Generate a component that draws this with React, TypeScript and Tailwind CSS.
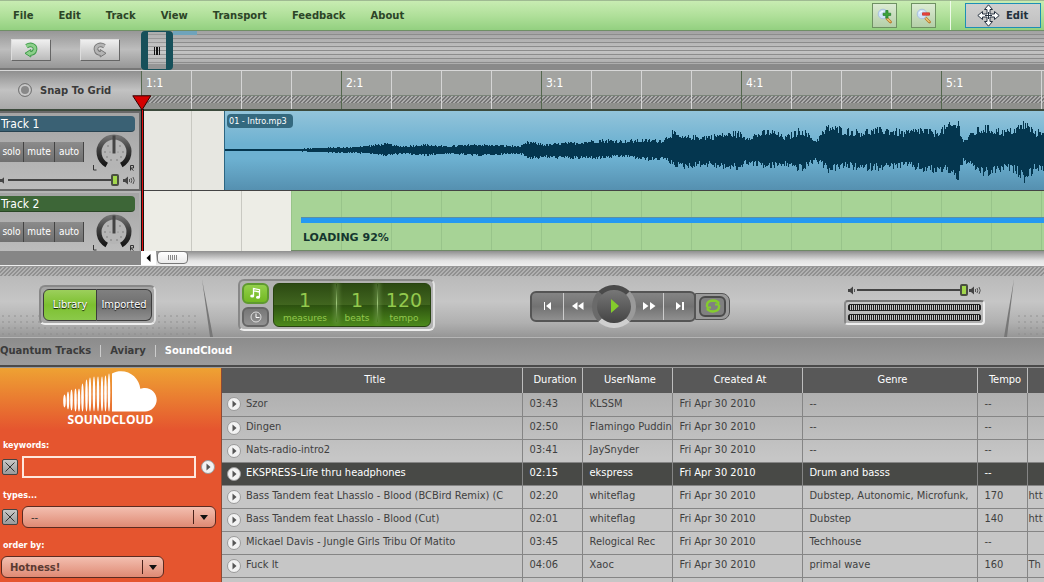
import React, { useState } from "react";

const MENU = ["File", "Edit", "Track", "View", "Transport", "Feedback", "About"];

const ENVELOPE: [number, number, number][] = [
  [0, 1, 1], [65, 1, 1], [85, 2, 2], [125, 3, 3], [145, 5, 4], [160, 7, 6], [175, 4, 4],
  [200, 6, 6], [220, 4, 4], [250, 6, 6], [275, 5, 5], [295, 4, 4], [303, 9, 9], [320, 6, 8],
  [350, 8, 9], [375, 11, 9], [400, 10, 7], [425, 11, 11], [438, 11, 10], [447, 20, 15],
  [455, 14, 19], [480, 15, 16], [513, 19, 21], [520, 14, 14], [545, 21, 19], [560, 14, 16],
  [577, 23, 22], [590, 10, 11], [603, 26, 22], [620, 22, 18], [635, 20, 21], [660, 23, 19],
  [680, 19, 17], [695, 23, 21], [710, 19, 23], [722, 26, 22], [733, 30, 31], [738, 10, 12],
  [750, 21, 21], [760, 25, 27], [780, 20, 20], [790, 23, 23], [800, 30, 32], [810, 19, 20],
  [819, 24, 22], [1400, 22, 22],
];

function buildWave(): string {
  let seed = 12345;
  const rnd = () => {
    seed = (seed * 1103515245 + 12345) % 2147483648;
    return seed / 2147483648;
  };
  let d = "";
  let k = 0;
  for (let x = 0; x < 1400; x++) {
    while (k < ENVELOPE.length - 2 && x >= ENVELOPE[k + 1][0]) k++;
    const [x0, u0, d0] = ENVELOPE[k];
    const [x1, u1, d1] = ENVELOPE[k + 1];
    const t = Math.min(1, (x - x0) / (x1 - x0));
    const up = Math.max(1, Math.round((u0 + (u1 - u0) * t) * (0.65 + 0.4 * rnd())));
    const dn = Math.max(1, Math.round((d0 + (d1 - d0) * t) * (0.65 + 0.4 * rnd())));
    d += `M${x} ${39 - up}h1v${up + dn}h-1z`;
  }
  return d;
}
const WAVE = buildWave();

type Row = { title: string; dur: string; user: string; genre: string; tempo: string; extra: string };
const ROWS: Row[] = [
  { title: "Szor", dur: "03:43", user: "KLSSM", genre: "--", tempo: "--", extra: "" },
  { title: "Dingen", dur: "02:50", user: "Flamingo Puddin", genre: "--", tempo: "--", extra: "" },
  { title: "Nats-radio-intro2", dur: "03:41", user: "JaySnyder", genre: "--", tempo: "--", extra: "" },
  { title: "EKSPRESS-Life thru headphones", dur: "02:15", user: "ekspress", genre: "Drum and basss", tempo: "--", extra: "" },
  { title: "Bass Tandem feat Lhasslo - Blood (BCBird Remix) (C", dur: "02:20", user: "whiteflag", genre: "Dubstep, Autonomic, Microfunk,", tempo: "170", extra: "htt" },
  { title: "Bass Tandem feat Lhasslo - Blood (Cut)", dur: "02:01", user: "whiteflag", genre: "Dubstep", tempo: "140", extra: "htt" },
  { title: "Mickael Davis - Jungle Girls Tribu Of Matito", dur: "03:45", user: "Relogical Rec", genre: "Techhouse", tempo: "--", extra: "" },
  { title: "Fuck It", dur: "04:06", user: "Xaoc", genre: "primal wave", tempo: "160", extra: "Th" },
];

const HATCH = "bg-[linear-gradient(135deg,#767676_25%,#adadad_25%,#adadad_50%,#767676_50%,#767676_75%,#adadad_75%)] bg-[size:4px_4px]";
const DOTS = "bg-[radial-gradient(circle,#8a8a8a_1px,transparent_1px)] bg-[size:6px_6px]";

function MagIcon({ plus }: { plus: boolean }) {
  return (
    <svg width="16" height="16" viewBox="0 0 16 16" aria-hidden="true">
      <path d="M9.500 10l4 4" stroke="#b9792a" strokeWidth="2.800" strokeLinecap="round" />
      <path d="M10 10.500l3.200 3.200" stroke="#f2cf7e" strokeWidth="1.200" strokeLinecap="round" />
      <circle cx="6" cy="6" r="4.800" fill="#cfe3f8" stroke="#a9c1dc" />
      <path d="M3.300 5.500a3 3 0 0 1 3-2.300" stroke="#fff" fill="none" />
      {plus ? (
        <path d="M8.800 2.500h2.200v2.700h2.700v2.200H11v2.700H8.800V7.400H6.100V5.200h2.700z" fill="#3fa53a" stroke="#1f7a28" strokeWidth=".7" />
      ) : (
        <path d="M6.500 4.800h7v2.400h-7z" fill="#ef4a40" stroke="#c0251f" strokeWidth=".7" />
      )}
    </svg>
  );
}

function MoveIcon() {
  return (
    <svg width="23" height="23" viewBox="0 0 23 23" aria-hidden="true">
      <path
        d="M11.500 .8l4 4.700h-2.500v4.500h4.500V7.500l4.700 4-4.700 4V13h-4.500v4.500h2.500l-4 4.700-4-4.700h2.500V13H5.500v2.500l-4.700-4 4.700-4V10H10V5.500H7.500z"
        fill="#fff" stroke="#26313f" strokeWidth="1"
      />
      <path d="M11.500 8v7M8 11.500h7" stroke="#26313f" />
    </svg>
  );
}

function UndoIcon({ redo }: { redo?: boolean }) {
  const edge = redo ? "#777" : "#3d9a48";
  const fill = redo ? "#b4b4b4" : "#8ccf8a";
  const arc = "M3.500 4.200C8 1.500 12.500 3.500 12 7.500c-.5 2.700-2.800 4-5 4";
  return (
    <svg width="16" height="16" viewBox="0 0 16 16" aria-hidden="true">
      <g transform={redo ? "matrix(-1 0 0 1 16 0)" : undefined} fill="none">
        <path d={arc} stroke={edge} strokeWidth="4.600" />
        <path d="M7.800 7.500v7.500L2 11.300z" fill={fill} stroke={edge} />
        <path d={arc} stroke={fill} strokeWidth="2.800" />
      </g>
    </svg>
  );
}

function Speaker({ loud }: { loud?: boolean }) {
  return (
    <svg width={loud ? 12 : 8} height="9" viewBox={loud ? "0 0 12 9" : "0 0 8 9"} aria-hidden="true">
      <path d="M0 3h2l3-2.500v8L2 6H0z" fill="#444" />
      <path d="M6.500 3v3" stroke="#555" fill="none" />
      {loud && <path d="M8 2q1.500 2.500 0 5M10 1q2.500 3.500 0 7" stroke="#555" fill="none" />}
    </svg>
  );
}

function Knob() {
  return (
    <svg width="42" height="38" viewBox="0 0 42 38" aria-hidden="true">
      <defs>
        <linearGradient id="knob" x1="0" y1="0" x2="0" y2="1">
          <stop offset="0" stopColor="#707070" />
          <stop offset=".5" stopColor="#3a3a3a" />
          <stop offset="1" stopColor="#161616" />
        </linearGradient>
      </defs>
      <circle cx="21" cy="19" r="12" fill="#b5b5b5" />
      <path d="M13.700 32A15 15 0 1 1 28.300 32" fill="none" stroke="url(#knob)" strokeWidth="5" />
      <path d="M21 2.500v18" stroke="#444" strokeWidth="3" />
      <g fill="#777">
        <circle cx="15" cy="13" r=".8" /><circle cx="27" cy="13" r=".8" />
        <circle cx="12" cy="19" r=".8" /><circle cx="30" cy="19" r=".8" />
        <circle cx="14" cy="24" r=".8" /><circle cx="28" cy="24" r=".8" />
        <circle cx="18" cy="27" r=".8" /><circle cx="24" cy="27" r=".8" />
        <circle cx="17" cy="19" r=".6" /><circle cx="25" cy="19" r=".6" />
      </g>
      <path d="M.5 32v5h3M37.500 37.500v-5h3v2.500h-3l3 2.500" stroke="#333" fill="none" />
    </svg>
  );
}

function Slider({ label }: { label: string }) {
  return (
    <input
      type="range"
      defaultValue={100}
      aria-label={label}
      className="h-3 w-full min-w-0 flex-1 appearance-none bg-[linear-gradient(#444,#444)] bg-[size:100%_2px] bg-center bg-no-repeat [&::-webkit-slider-thumb]:h-3 [&::-webkit-slider-thumb]:w-2 [&::-webkit-slider-thumb]:appearance-none [&::-webkit-slider-thumb]:rounded-xs [&::-webkit-slider-thumb]:border-2 [&::-webkit-slider-thumb]:border-[#4a4f40] [&::-webkit-slider-thumb]:bg-[#a3d84c]"
    />
  );
}

function TrackHeader({ name, selected }: { name: string; selected?: boolean }) {
  return (
    <div
      className={
        "w-[141px] shrink-0 overflow-hidden bg-[linear-gradient(#a4a4a4,#bcbcbc)] " +
        (selected ? "h-20 border-y-2 border-r-2 border-[#686868]" : "h-15 border-t-2 border-r-2 border-t-[#b4b4b4] border-r-[#b0b0b0]")
      }
    >
      <div
        className={
          "mt-[3px] mr-1 h-4 rounded-r border-b border-black/30 pl-px font-[DejaVu_Sans_Condensed] text-[12px] leading-4 text-white " +
          (selected ? "bg-[#3a6174]" : "bg-[#3d6637]")
        }
      >
        {name}
      </div>
      <div className="flex h-[39px] items-end justify-between pr-1">
        <div className="mb-[9px] flex h-5">
          {["solo", "mute", "auto"].map((b, i) => (
            <button
              key={b}
              className={
                "border-r border-r-[#444] bg-[linear-gradient(#8b8b8b,#707070)] font-[DejaVu_Sans_Condensed] text-[10px] leading-5 text-white " +
                (i === 0 ? "w-6" : i === 1 ? "w-[31px]" : "w-[29px]")
              }
            >
              {b}
            </button>
          ))}
        </div>
        <Knob />
      </div>
      <div className="flex items-center gap-1 pr-1 pt-[3px]">
        <span className="w-1 overflow-hidden"><Speaker /></span>
        <Slider label={name + " volume"} />
        <Speaker loud />
      </div>
    </div>
  );
}

function PlayDot() {
  return (
    <svg width="16" height="16" viewBox="0 0 16 16" aria-hidden="true">
      <circle cx="8" cy="8" r="6.500" fill="#f2f2f2" stroke="#9a9a9a" />
      <path d="M6.500 4.500v7L10.500 8z" fill="#555" />
    </svg>
  );
}

function CloudLogo() {
  const bars: [number, number, number][] = [
    [1.5, 24, 36], [5, 21, 38], [8.5, 19, 39], [12.5, 18, 40], [16, 18, 40], [19.5, 13, 40], [23.5, 9, 40],
    [27, 7, 40], [31, 6, 40], [35, 6, 40], [39, 6, 40], [42.500, 5, 40], [46, 3, 40],
  ];
  return (
    <svg width="96" height="41" viewBox="0 0 96 41" aria-label="SoundCloud" role="img">
      {bars.map(([x, a, b]) => (
        <ellipse key={x} cx={x} cy={(a + b) / 2} rx="1.300" ry={(b - a) / 2 + 0.5} fill="#fff" />
      ))}
      <path d="M49 2.500C52 .8 55 .3 58 .3c10 0 18.500 7.700 19.300 17.500 1.600-.7 3-.9 4.700-.9 6.500 0 11.700 5.300 11.700 11.800S88.500 40.500 82 40.500H49z" fill="#fff" />
    </svg>
  );
}

const PATHS = {
  start: "M3 1h1v8H3zM10 1v8L5 5z",
  rew: "M5.500 1v8L0 5zM11.500 1v8L6 5z",
  fwd: "M0 1v8l5.500-4zM7 1v8l5.500-4z",
  end: "M3 1v8l5-4zM9 1h2v8H9z",
};
function Glyph({ d }: { d: string }) {
  return (
    <svg width="13" height="10" viewBox="0 0 13 10" aria-hidden="true"><path d={d} fill="#fff" /></svg>
  );
}

function Lcd({ n, label, w }: { n: string; label: string; w: string }) {
  return (
    <div className={"flex flex-col items-center " + w}>
      <span className="text-[19px] leading-6">{n}</span>
      <span className="text-[9px] leading-3">{label}</span>
    </div>
  );
}

export default function App() {
  const [snap, setSnap] = useState(false);
  const th = "border-r border-[#bdbdbd] p-0 pl-[6px] font-normal";
  const td = "overflow-hidden whitespace-nowrap border-r border-[#858585] p-0 pl-[7px] text-left";
  const smallLabel = "pl-[3px] text-[8px] font-bold leading-3";
  const xButton = "flex size-4 shrink-0 items-center justify-center rounded-xs border border-[#444] bg-[linear-gradient(#c8c8c8,#9a9a9a)]";
  return (
    <div className="flex h-screen flex-col overflow-hidden bg-[#a5a5a5] font-[DejaVu_Sans,sans-serif] text-[#333]">
      <header className="flex h-[31px] shrink-0 items-center border-y border-t-[#9fba92] border-b-[#6f8f66] bg-[linear-gradient(#c8ecb2,#b0e09a_50%,#93d080)]">
        <nav className="flex flex-1 gap-[25px] pl-[13px]">
          {MENU.map((m) => (
            <button key={m} className="text-[10px] font-bold leading-4 text-[#2c4527]">{m}</button>
          ))}
        </nav>
        <button aria-label="Zoom in" className="mr-[14px] flex size-[25px] items-center justify-center border border-[#6f9163] bg-[linear-gradient(#dcecd3,#b4cfa8)]"><MagIcon plus /></button>
        <button aria-label="Zoom out" className="mr-[14px] flex size-[25px] items-center justify-center border border-[#6f9163] bg-[linear-gradient(#dcecd3,#b4cfa8)]"><MagIcon plus={false} /></button>
        <div className="mr-[14px] h-full w-px bg-[#eefae8]" />
        <button className="mr-[3px] flex h-[25px] w-[76px] items-center gap-[6px] border border-[#1d8fb5] bg-[linear-gradient(#cfcfcf,#c0c0c0)] pl-[11px] text-[10px] font-bold text-[#22303c]">
          <MoveIcon />Edit
        </button>
      </header>

      <div className="flex h-10 shrink-0 border-b border-[#d8d8d8]">
        <div className="flex w-[141px] shrink-0 items-center gap-[29px] border-b-2 border-[#777] bg-[linear-gradient(#979797,#bdbdbd_50%,#979797)] pl-[11px]">
          <button aria-label="Undo" className="flex h-[22px] w-10 items-center justify-center border border-t-[#ddd] border-r-[#666] border-b-[#666] border-l-[#ddd] bg-[linear-gradient(#efefef,#bbb)]"><UndoIcon /></button>
          <button aria-label="Redo" className="flex h-[22px] w-10 items-center justify-center border border-t-[#ddd] border-r-[#666] border-b-[#666] border-l-[#ddd] bg-[linear-gradient(#efefef,#bbb)]"><UndoIcon redo /></button>
        </div>
        <div className="flex flex-1 border-b-[6px] border-[#8a8a8a] bg-[repeating-linear-gradient(transparent_0px,transparent_3px,#8c8c8c_3px,#8c8c8c_4px),linear-gradient(#a2a2a2,#c4c4c4_60%,#adadad)]">
          <div className="flex h-[39px] w-8 items-center justify-center rounded border-x-[7px] border-y border-[#17505a] bg-white/10">
            <svg width="7" height="8" viewBox="0 0 7 8" aria-hidden="true"><path d="M0 0h1v8H0zM2 0h2v8H2zM5 0h1v8H5z" fill="#111" /></svg>
          </div>
          <div className="h-1 w-6 bg-[#6fa3bb]" />
        </div>
      </div>

      <div className="relative shrink-0">
        <div className="flex h-10 border-b-2 border-[#3c4a3c]">
          <label className="flex w-[141px] shrink-0 items-center gap-2 bg-[linear-gradient(#8f8f8f,#c2c2c2_50%,#a8a8a8)] pl-[18px] text-[10px] font-bold text-[#3a3a3a]">
            <input type="radio" checked={snap} onChange={() => undefined} onClick={() => setSnap(!snap)} className="size-[14px] appearance-none rounded-full border border-[#777] bg-[#888] shadow-[inset_0_0_0_2px_#c9c9c9]" />
            Snap To Grid
          </label>
          <div className="relative min-w-0 flex-1 overflow-hidden bg-[#a3a4a1]">
            <div className="h-6" />
            <div className={"h-2 border-t border-[#7b857a] " + HATCH} />
            <div className="h-2 bg-[#8f908d]" />
            <div className="absolute inset-0 flex bg-[repeating-linear-gradient(90deg,transparent_0px,transparent_50px,#d5d5d5_50px,#d5d5d5_51px,transparent_51px,transparent_100px,#d5d5d5_100px,#d5d5d5_101px,transparent_101px,transparent_150px,#d5d5d5_150px,#d5d5d5_151px,transparent_151px,transparent_200px)]">
              {["1:1", "2:1", "3:1", "4:1", "5:1"].map((t) => (
                <span key={t} className="w-[200px] shrink-0 border-l border-[#55684f] pl-1 pt-1 font-[DejaVu_Sans_Condensed] text-[12px] leading-4 text-white">{t}</span>
              ))}
            </div>
          </div>
        </div>

        <div className="flex h-20">
          <TrackHeader name="Track 1" selected />
          <div className="min-w-0 flex-1 border-b border-[#444] bg-[repeating-linear-gradient(90deg,transparent_0px,transparent_50px,#c9c9c2_50px,#c9c9c2_51px,transparent_51px,transparent_100px)] bg-[#e7e7e1]">
            <div className="relative ml-[83px] h-full overflow-hidden border-l border-[#2c6682] bg-[linear-gradient(#93c4da,#6db1d1_42%,#6db1d1_60%,#5590b0)]">
              <svg width="1400" height="78" viewBox="0 0 1400 78" className="absolute left-0 top-0" shapeRendering="crispEdges" aria-hidden="true">
                <path d={WAVE} fill="#04364f" />
              </svg>
              <span className="relative ml-[2px] mt-[3px] block h-[14px] w-[66px] whitespace-nowrap rounded-sm bg-[#34697f] pl-[2px] font-[DejaVu_Sans_Condensed] text-[9px] leading-[14px] text-white">01 - Intro.mp3</span>
            </div>
          </div>
        </div>
        <div className="flex h-15">
          <TrackHeader name="Track 2" />
          <div className="min-w-0 flex-1 bg-[repeating-linear-gradient(90deg,#c9c9c2_0px,#c9c9c2_1px,transparent_1px,transparent_50px)] bg-[#edede6]">
            <div className="ml-[150px] h-full border-b border-[#6f8a66] bg-[repeating-linear-gradient(90deg,#98c48a_0px,#98c48a_1px,transparent_1px,transparent_50px)] bg-[#a7d396] pt-[26px] pl-[10px]">
              <div role="progressbar" aria-label="Loading" aria-valuenow={92} className="h-[6px] border-t border-[#5b8ea5] bg-[#2599f2]" />
              <p className="mt-[7px] pl-[2px] text-[11px] font-bold leading-4 text-[#15362f]">LOADING 92%</p>
            </div>
          </div>
        </div>
        <svg width="20" height="156" viewBox="0 0 20 156" className="absolute bottom-0 left-[132px]" aria-hidden="true">
          <path d="M9 14h3v142H9z" fill="#111" /><path d="M10 14h1v142h-1z" fill="#e01010" />
          <path d="M.8.8h18L10 15z" fill="#d40000" stroke="#300" />
        </svg>
      </div>

      <div className="flex h-[14px] shrink-0">
        <div className="w-[141px] bg-[#868686]" />
        <div className="flex flex-1 bg-[linear-gradient(#8f8f8f,#e4e4e4_70%,#ededed)]">
          <button aria-label="Scroll left" className="flex w-[15px] items-center justify-center bg-white">
            <svg width="5" height="8" viewBox="0 0 5 8" aria-hidden="true"><path d="M4.500 0v8L.5 4z" fill="#000" /></svg>
          </button>
          <div className="ml-px flex h-[13px] w-[31px] items-center justify-center rounded border border-[#777] bg-[linear-gradient(#fff,#eaeaea)]">
            <svg width="10" height="5" viewBox="0 0 10 5" aria-hidden="true"><path d="M.5 0v5M2.500 0v5M4.500 0v5M6.500 0v5M8.500 0v5" stroke="#888" /></svg>
          </div>
        </div>
      </div>

      <section className="flex h-[72px] shrink-0 flex-col border-t border-[#eee] bg-[linear-gradient(#b5b5b5,#c6c6c6_50%,#b0b0b0_80%,#969696)]">
        <div className={"h-[10px] shrink-0 border-t border-[#888] opacity-60 " + HATCH} />
        <div className="relative flex min-h-0 flex-1">
          <div className={"absolute bottom-0 left-0 h-6 w-[200px] opacity-40 " + DOTS} />
          <div className={"absolute right-0 bottom-0 h-6 w-7 opacity-40 " + DOTS} />
          <svg width="14" height="58" viewBox="0 0 14 58" className="absolute bottom-0 left-[202px]" aria-hidden="true"><path d="M0 0l8 58h3z" fill="#777" /></svg>
          <svg width="14" height="58" viewBox="0 0 14 58" className="absolute right-[28px] bottom-0" aria-hidden="true"><path d="M12 0L2 58h3z" fill="#777" /></svg>

          <div className="relative mt-[9px] ml-[39px] flex h-10 w-[117px] rounded-md border-2 border-t-[#888] border-r-[#e2e2e2] border-b-[#eee] border-l-[#888] bg-[#a5a5a5] p-[2px]">
            <button className="w-[54px] rounded-l-md border border-[#3c3c3c] bg-[linear-gradient(#9ccf5c,#7cc02f_50%,#8bc94a)] font-[DejaVu_Sans_Condensed] text-[11px] text-white [text-shadow:0_1px_1px_#000]">Library</button>
            <button className="flex-1 rounded-r-md border border-l-0 border-[#3c3c3c] bg-[linear-gradient(#808080,#6f6f6f_50%,#8f8f8f)] font-[DejaVu_Sans_Condensed] text-[11px] text-white [text-shadow:0_1px_1px_#000]">Imported</button>
          </div>

          <div className="relative mt-[3px] ml-[82px] flex h-[52px] w-[197px] gap-1 rounded-md border-2 border-t-[#888] border-r-[#e2e2e2] border-b-[#eee] border-l-[#888] bg-[#b2b2b2] p-[2px]">
            <div className="flex w-[27px] flex-col gap-[3px]">
              <button aria-label="Musical time" className="flex h-[21px] items-center justify-center rounded-md border-2 border-[#5f9930] bg-[linear-gradient(#93d04b,#72b822)]">
                <svg width="11" height="12" viewBox="0 0 11 12" aria-hidden="true"><path d="M3.500 9V1.500l6 1.200V10M3.500 3.800l6 1.200" stroke="#fff" strokeWidth="1.300" fill="none" /><ellipse cx="2.200" cy="9" rx="2" ry="1.500" fill="#fff" /><ellipse cx="8" cy="10.300" rx="2" ry="1.500" fill="#fff" /></svg>
              </button>
              <button aria-label="Clock time" className="flex h-[21px] items-center justify-center rounded-md border-2 border-[#666] bg-[linear-gradient(#777,#929292)]">
                <svg width="12" height="12" viewBox="0 0 12 12" aria-hidden="true"><circle cx="6" cy="6" r="5" fill="none" stroke="#ddd" /><path d="M6 2.500V6.500h3.500" stroke="#fff" fill="none" /></svg>
              </button>
            </div>
            <div className="flex w-[158px] rounded-md border border-[#27430f] bg-[linear-gradient(#2c4a13,#41661f_50%,#2d5210_51%,#4d8a1c)] pt-1 text-[#93c94d]">
              <Lcd n="1" label="measures" w="w-[62px]" />
              <div className="-mt-1 mb-1 w-px bg-[linear-gradient(transparent,#9fc77b,transparent)] shadow-[0_0_4px_2px_#7fa65c80]" />
              <Lcd n="1" label="beats" w="w-[40px]" />
              <div className="-mt-1 mb-1 w-px bg-[linear-gradient(transparent,#9fc77b,transparent)] shadow-[0_0_4px_2px_#7fa65c80]" />
              <Lcd n="120" label="tempo" w="w-[52px]" />
            </div>
          </div>

          <div className="relative mt-[14px] ml-[95px] flex h-8 w-[200px] items-center">
            <div className="flex h-[31px] w-[166px] items-stretch rounded-md border-2 border-[#555] bg-[linear-gradient(#858585,#727272_50%,#8f8f8f)]">
              <button aria-label="Go to start" className="flex w-8 items-center justify-center border-r border-[#ccc]"><Glyph d={PATHS.start} /></button>
              <button aria-label="Rewind" className="flex w-7 items-center justify-center"><Glyph d={PATHS.rew} /></button>
              <button aria-label="Play" className="-my-2 flex w-11 shrink-0 items-center justify-center rounded-full border-[5px] border-t-[#4a4a4a] border-r-[#9a9a9a] border-b-[#cfcfcf] border-l-[#6a6a6a] bg-[linear-gradient(#777,#444)]">
                <svg width="9" height="14" viewBox="0 0 9 14" aria-hidden="true"><path d="M1 0v14l8-7z" fill="#84cc2c" /></svg>
              </button>
              <button aria-label="Fast forward" className="flex w-7 items-center justify-center border-r border-[#ccc]"><Glyph d={PATHS.fwd} /></button>
              <button aria-label="Go to end" className="flex flex-1 items-center justify-center"><Glyph d={PATHS.end} /></button>
            </div>
            <div className="-ml-px flex h-[27px] w-[35px] items-center justify-center rounded-r-lg border border-[#555] bg-[#9a9a9a]">
              <button aria-label="Loop" className="flex h-[21px] w-[27px] items-center justify-center rounded-md border-2 border-[#4b4b4b] bg-[#808080]">
                <svg width="16" height="14" viewBox="0 0 16 14" fill="none" stroke="#84cc2c" strokeWidth="2.400" aria-hidden="true"><path d="M2 8V6q0-4 6-4.500 4 0 5.500 2.500M14 6v2q0 4-6 4.500-4 0-5.500-2.500" /><path d="M13.500 2.500v3H10M2.500 11.500v-3H6" strokeWidth="1.800" /></svg>
              </button>
            </div>
          </div>

          <div className="relative mr-[59px] ml-auto flex w-[141px] flex-col pt-2">
            <div className="flex h-3 items-center gap-px px-1">
              <Speaker />
              <Slider label="Master volume" />
              <Speaker loud />
            </div>
            <div className="mt-1 flex h-[25px] flex-col gap-[3px] rounded border-2 border-t-[#777] border-r-[#eee] border-b-[#eee] border-l-[#888] px-[2px] pt-[2px]">
              {["Left", "Right"].map((c) => (
                <div key={c} aria-label={c + " level"} role="img" className="h-[7px] rounded-xs border border-[#222] bg-[repeating-linear-gradient(90deg,#1c1c1c_0px,#1c1c1c_1px,#c4c4c4_1px,#c4c4c4_2px)]" />
              ))}
            </div>
          </div>
        </div>
      </section>

      <nav className="flex h-[30px] shrink-0 items-center gap-[9px] border-t border-b-2 border-t-[#b5b5b5] border-b-[#4a4a4a] bg-[linear-gradient(#8c8c8c,#9c9c9c)] pb-[2px] text-[10px] font-bold text-[#3b3b3b]">
        <a href="#quantum">Quantum Tracks</a>
        <span className="h-3 w-px bg-[#ccc]" />
        <a href="#aviary">Aviary</a>
        <span className="h-3 w-px bg-[#ccc]" />
        <a href="#soundcloud" className="text-white">SoundCloud</a>
      </nav>

      <main className="flex min-h-0 flex-1 border-t border-[#999]">
        <aside className="flex w-[222px] shrink-0 flex-col border-r border-[#8c4a35] bg-[linear-gradient(#eea233,#e5552f_62px)] text-white">
          <div className="flex flex-col items-center pt-[3px]">
            <CloudLogo />
            <span className="font-[Open_Sans] text-[12px] font-bold leading-4">SOUNDCLOUD</span>
          </div>
          <label htmlFor="kw" className={"mt-3 " + smallLabel}>keywords:</label>
          <div className="mt-[4px] flex h-[22px] items-center pl-[2px]">
            <button aria-label="Clear keywords" className={xButton}><svg width="10" height="10" viewBox="0 0 10 10" aria-hidden="true"><path d="M.5.5l9 9M9.500.5l-9 9" stroke="#333" /></svg></button>
            <input id="kw" className="ml-1 h-[22px] w-[174px] border-2 border-[#ffe7de] bg-transparent px-1 text-[10px]" />
            <button aria-label="Search" className="ml-1"><PlayDot /></button>
          </div>
          <label htmlFor="types" className={"mt-[12px] " + smallLabel}>types...</label>
          <div className="mt-[4px] flex h-[22px] items-center pl-[2px]">
            <button aria-label="Clear types" className={xButton}><svg width="10" height="10" viewBox="0 0 10 10" aria-hidden="true"><path d="M.5.5l9 9M9.500.5l-9 9" stroke="#333" /></svg></button>
            <div className="relative ml-1 flex">
              <select id="types" className="h-[22px] w-[194px] appearance-none rounded-md border border-[#5c2a20] bg-[linear-gradient(#f3bfb0,#df8a74)] pl-2 text-[10px] text-[#333]"><option>--</option></select>
              <svg width="20" height="14" viewBox="0 0 20 14" className="pointer-events-none absolute top-1 right-[3px]" aria-hidden="true"><path d="M.5 0v14" stroke="#4a221a" /><path d="M7 5h8l-4 5z" fill="#111" /></svg>
            </div>
          </div>
          <label htmlFor="order" className={"mt-[12px] " + smallLabel}>order by:</label>
          <div className="relative mt-[4px] flex w-[164px] pl-px">
            <select id="order" className="h-[22px] w-full appearance-none rounded-md border border-[#5c2a20] bg-[linear-gradient(#f3bfb0,#df8a74)] pl-2 text-[10px] font-bold text-[#5a3a32]"><option>Hotness!</option></select>
            <svg width="20" height="14" viewBox="0 0 20 14" className="pointer-events-none absolute top-1 right-[2px]" aria-hidden="true"><path d="M.5 0v14" stroke="#4a221a" /><path d="M7 5h8l-4 5z" fill="#111" /></svg>
          </div>
        </aside>
        <div className="min-w-0 flex-1 overflow-hidden bg-[linear-gradient(#b0b0b0_25px,#c6c6c6_90px,#c6c6c6)]">
          <table className="w-full table-fixed border-collapse font-[DejaVu_Sans_Condensed] text-[11px]">
            <colgroup>
              <col className="w-[300px]" /><col className="w-[60px]" /><col className="w-[90px]" /><col className="w-[130px]" /><col className="w-[175px]" /><col className="w-[50px]" /><col />
            </colgroup>
            <thead>
              <tr className="h-[25px] bg-[#585858] text-white">
                <th className={th}>Title</th><th className={th}>Duration</th><th className={th}>UserName</th><th className={th}>Created At</th><th className={th}>Genre</th><th className={th}>Tempo</th><th className="p-0" />
              </tr>
            </thead>
            <tbody>
              {ROWS.map((r, i) => (
                <tr key={r.title} className={"h-[23px] border-b border-[#858585] " + (i === 3 ? "bg-[#484946] text-white" : "text-[#3f3f3f]")}>
                  <td className="overflow-hidden whitespace-nowrap border-r border-[#858585] p-0 pl-1">
                    <span className="flex items-center gap-1"><button aria-label={"Play " + r.title} className="shrink-0"><PlayDot /></button>{r.title}</span>
                  </td>
                  <td className={td}>{r.dur}</td>
                  <td className={td}>{r.user}</td>
                  <td className={td}>Fri Apr 30 2010</td>
                  <td className={td}>{r.genre}</td>
                  <td className={td}>{r.tempo}</td>
                  <td className="overflow-hidden whitespace-nowrap p-0 pl-px">{r.extra}</td>
                </tr>
              ))}
              <tr className="h-[23px]">
                <td className="border-r border-[#858585] p-0 pl-1"><button aria-label="Play next track" className="block"><PlayDot /></button></td>
                <td className={td} /><td className={td} /><td className={td} /><td className={td} /><td className={td} /><td />
              </tr>
            </tbody>
          </table>
        </div>
      </main>
    </div>
  );
}
